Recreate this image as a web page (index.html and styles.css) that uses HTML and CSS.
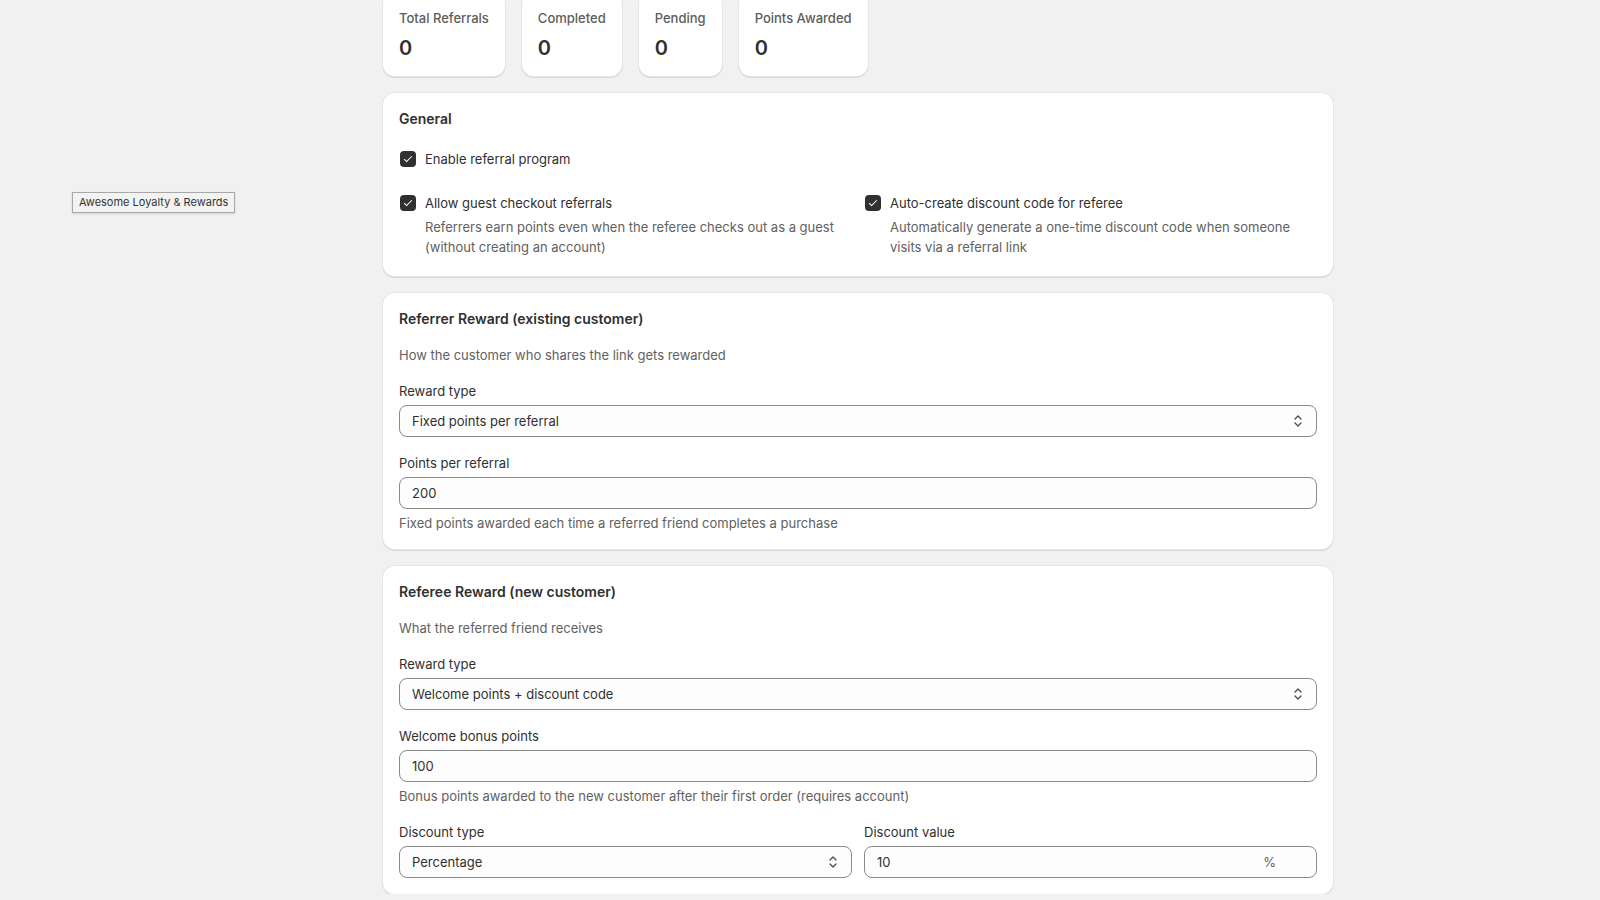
FILE: index.html
```html
<!DOCTYPE html>
<html>
<head>
  <title>Referral Program</title>
  <meta name="viewport" content="width=device-width, initial-scale=1.0">
  <link rel="stylesheet" href="styles.css">
</head>
<body>
  <div class="app-title-tip">Awesome Loyalty &amp; Rewards</div>

  <div class="page">
    <div class="stats">
      <div class="stat-card">
        <div class="stat-label">Total Referrals</div>
        <div class="stat-value">0</div>
      </div>
      <div class="stat-card">
        <div class="stat-label">Completed</div>
        <div class="stat-value">0</div>
      </div>
      <div class="stat-card">
        <div class="stat-label">Pending</div>
        <div class="stat-value">0</div>
      </div>
      <div class="stat-card">
        <div class="stat-label">Points Awarded</div>
        <div class="stat-value">0</div>
      </div>
    </div>

    <!-- General -->
    <div class="card card-general">
      <h2 class="card-title">General</h2>
      <div class="check-list">
        <label class="check-item">
          <span class="checkbox checked"></span>
          <span class="check-label">Enable referral program</span>
        </label>
        <div class="two-col">
          <div>
            <label class="check-item">
              <span class="checkbox checked"></span>
              <span class="check-label">Allow guest checkout referrals</span>
            </label>
            <div class="check-help">Referrers earn points even when the referee checks out as a guest (without creating an account)</div>
          </div>
          <div>
            <label class="check-item">
              <span class="checkbox checked"></span>
              <span class="check-label">Auto-create discount code for referee</span>
            </label>
            <div class="check-help">Automatically generate a one-time discount code when someone visits via a referral link</div>
          </div>
        </div>
      </div>
    </div>

    <!-- Referrer reward -->
    <div class="card">
      <h2 class="card-title">Referrer Reward (existing customer)</h2>
      <p class="card-subtitle">How the customer who shares the link gets rewarded</p>

      <div class="field">
        <div class="field-label">Reward type</div>
        <div class="select">
          <span>Fixed points per referral</span>
          <svg class="select-icon" viewBox="0 0 8 14" width="8" height="14"><path d="M1 5 L4 2 L7 5 M1 9 L4 12 L7 9" fill="none" stroke="#4a4a4a" stroke-width="1.3" stroke-linecap="round" stroke-linejoin="round"/></svg>
        </div>
      </div>

      <div class="field">
        <div class="field-label">Points per referral</div>
        <div class="input"><span>200</span></div>
        <div class="field-help">Fixed points awarded each time a referred friend completes a purchase</div>
      </div>
    </div>

    <!-- Referee reward -->
    <div class="card">
      <h2 class="card-title">Referee Reward (new customer)</h2>
      <p class="card-subtitle">What the referred friend receives</p>

      <div class="field">
        <div class="field-label">Reward type</div>
        <div class="select">
          <span>Welcome points + discount code</span>
          <svg class="select-icon" viewBox="0 0 8 14" width="8" height="14"><path d="M1 5 L4 2 L7 5 M1 9 L4 12 L7 9" fill="none" stroke="#4a4a4a" stroke-width="1.3" stroke-linecap="round" stroke-linejoin="round"/></svg>
        </div>
      </div>

      <div class="field">
        <div class="field-label">Welcome bonus points</div>
        <div class="input"><span>100</span></div>
        <div class="field-help">Bonus points awarded to the new customer after their first order (requires account)</div>
      </div>

      <div class="field two-col">
        <div>
          <div class="field-label">Discount type</div>
          <div class="select">
            <span>Percentage</span>
            <svg class="select-icon" viewBox="0 0 8 14" width="8" height="14"><path d="M1 5 L4 2 L7 5 M1 9 L4 12 L7 9" fill="none" stroke="#4a4a4a" stroke-width="1.3" stroke-linecap="round" stroke-linejoin="round"/></svg>
          </div>
        </div>
        <div>
          <div class="field-label">Discount value</div>
          <div class="input">
            <span>10</span>
            <span class="input-suffix">%</span>
          </div>
        </div>
      </div>
    </div>
  </div>
</body>
</html>
```

FILE: styles.css
```css
* {
  box-sizing: border-box;
  font-family: Inter, -apple-system, BlinkMacSystemFont, 'Segoe UI', Roboto, sans-serif;
}

body {
  margin: 0;
  padding: 0;
  background-color: #f1f1f1;
  color: #303030;
  font-size: 13px;
  line-height: 20px;
  overflow: hidden;
}

.app-title-tip {
  position: absolute;
  left: 72px;
  top: 192px;
  padding: 0 6px;
  height: 21px;
  line-height: 19px;
  font-size: 11px;
  color: #333;
  background: #f3f3f3;
  border: 1px solid #a8a8a8;
  box-shadow: 0 1px 2px rgba(0,0,0,0.12);
}

.page {
  width: 950px;
  margin: -8px 0 0 383px;
  display: flex;
  flex-direction: column;
  gap: 17px;
}

.stats {
  display: flex;
  gap: 17px;
}

.stat-card,
.card {
  background: #fff;
  border-radius: 12px;
  box-shadow: 0 0 0 1px #e6e6e6, 0 1px 0 1px #d8d8d8;
}

.stat-card {
  padding: 16px;
}

.stat-label {
  font-weight: 500;
  color: #5c5c5c;
}

.stat-value {
  margin-top: 8px;
  font-size: 20px;
  line-height: 24px;
  font-weight: 600;
  color: #303030;
}

.card {
  padding: 16px;
}

.card-general {
  padding-bottom: 19px;
}

.card-title {
  margin: 0;
  font-size: 14px;
  line-height: 20px;
  font-weight: 600;
}

.card-subtitle {
  margin: 16px 0 0;
  color: #616161;
}

.check-list {
  margin-top: 16px;
  display: flex;
  flex-direction: column;
  gap: 16px;
}

.check-item {
  display: flex;
  align-items: center;
  padding: 4px 0;
}

.checkbox {
  width: 16px;
  height: 16px;
  margin: 0 9px 0 1px;
  border-radius: 4px;
  background: #303030;
  position: relative;
  flex-shrink: 0;
}

.checkbox.checked::after {
  content: '';
  position: absolute;
  left: 5.5px;
  top: 3px;
  width: 3px;
  height: 7px;
  border: solid #fff;
  border-width: 0 1.6px 1.6px 0;
  transform: rotate(45deg);
}

.check-help {
  padding-left: 26px;
  color: #616161;
}

.two-col {
  display: grid;
  grid-template-columns: 1fr 1fr;
  gap: 12px;
}

.field {
  margin-top: 16px;
}

.field-label {
  margin-bottom: 4px;
}

.select,
.input {
  height: 32px;
  display: flex;
  align-items: center;
  justify-content: space-between;
  padding: 0 12px;
  background: #fdfdfd;
  border: 1px solid #8a8a8a;
  border-radius: 8px;
  color: #303030;
}

.select-icon {
  margin-right: 2px;
}

.input-suffix {
  color: #616161;
  margin-right: 28px;
}

.field-help {
  margin-top: 4px;
  color: #616161;
}
```
